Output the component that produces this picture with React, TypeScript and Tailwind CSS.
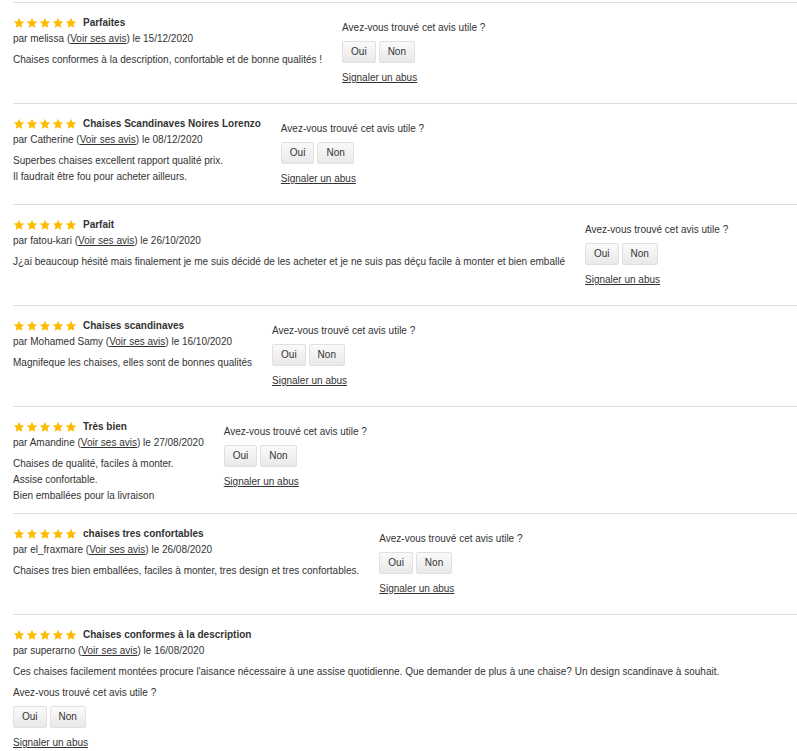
type Review = {
  title: string;
  author: string;
  date: string;
  lines: string[];
  stacked?: boolean;
};

const reviews: Review[] = [
  {
    title: "Parfaites",
    author: "melissa",
    date: "15/12/2020",
    lines: ["Chaises conformes à la description, confortable et de bonne qualités !"],
  },
  {
    title: "Chaises Scandinaves Noires Lorenzo",
    author: "Catherine",
    date: "08/12/2020",
    lines: ["Superbes chaises excellent rapport qualité prix.", "Il faudrait être fou pour acheter ailleurs."],
  },
  {
    title: "Parfait",
    author: "fatou-kari",
    date: "26/10/2020",
    lines: [
      "J¿ai beaucoup hésité mais finalement je me suis décidé de les acheter et je ne suis pas déçu facile à monter et bien emballé",
    ],
  },
  {
    title: "Chaises scandinaves",
    author: "Mohamed Samy",
    date: "16/10/2020",
    lines: ["Magnifeque les chaises, elles sont de bonnes qualités"],
  },
  {
    title: "Très bien",
    author: "Amandine",
    date: "27/08/2020",
    lines: ["Chaises de qualité, faciles à monter.", "Assise confortable.", "Bien emballées pour la livraison"],
  },
  {
    title: "chaises tres confortables",
    author: "el_fraxmare",
    date: "26/08/2020",
    lines: ["Chaises tres bien emballées, faciles à monter, tres design et tres confortables."],
  },
  {
    title: "Chaises conformes à la description",
    author: "superarno",
    date: "16/08/2020",
    lines: [
      "Ces chaises facilement montées procure l'aisance nécessaire à une assise quotidienne. Que demander de plus à une chaise? Un design scandinave à souhait.",
    ],
    stacked: true,
  },
];

function Star() {
  return (
    <svg width="12" height="12" viewBox="0 0 24 24" className="block">
      <polygon
        points="12,1.5 15.1,8.3 22.5,9.1 17,14.1 18.5,21.5 12,17.8 5.5,21.5 7,14.1 1.5,9.1 8.9,8.3"
        fill="#ffbb00"
      />
    </svg>
  );
}

function Helpful({ className }: { className: string }) {
  return (
    <div className={className}>
      <div className="h-4 leading-4 whitespace-nowrap">Avez-vous trouvé cet avis utile ?</div>
      <div className="mt-[5px] flex gap-[3px]">
        <button
          type="button"
          className="h-[22px] rounded-[2px] border border-[#e0e0e0] bg-gradient-to-b from-[#fafafa] to-[#e9e9e9] px-2 leading-5 text-[#333]"
        >
          Oui
        </button>
        <button
          type="button"
          className="h-[22px] rounded-[2px] border border-[#e0e0e0] bg-gradient-to-b from-[#fafafa] to-[#e9e9e9] px-2 leading-5 text-[#333]"
        >
          Non
        </button>
      </div>
      <a href="#" className="mt-[7px] block h-4 w-fit leading-4 whitespace-nowrap text-[#333] underline">
        Signaler un abus
      </a>
    </div>
  );
}

function ReviewItem({ review }: { review: Review }) {
  return (
    <div className={review.stacked ? "border-t border-[#dddddd]" : "flex items-start border-t border-[#dddddd]"}>
      <div className={review.stacked ? "pt-3" : "shrink-0 pt-3 pb-[9px]"}>
        <div className="flex h-4 items-center">
          <div className="flex gap-px">
            <Star />
            <Star />
            <Star />
            <Star />
            <Star />
          </div>
          <span className="ml-[6px] leading-4 font-bold">{review.title}</span>
        </div>
        <div className="leading-4">
          par {review.author} (<a href="#" className="text-[#333] underline">Voir ses avis</a>) le {review.date}
        </div>
        <div className="mt-[5px]">
          {review.lines.map((line) => (
            <div key={line} className="leading-4 whitespace-nowrap">
              {line}
            </div>
          ))}
        </div>
      </div>
      <Helpful className={review.stacked ? "mt-[5px]" : "mt-[17px] mb-[17px] ml-5"} />
    </div>
  );
}

export default function App() {
  return (
    <div className="min-h-[751px] bg-white pt-[2px] pl-[13px] font-['Liberation_Sans',Arial,sans-serif] text-[10px] text-[#333]">
      {reviews.map((review) => (
        <ReviewItem key={review.author} review={review} />
      ))}
    </div>
  );
}
